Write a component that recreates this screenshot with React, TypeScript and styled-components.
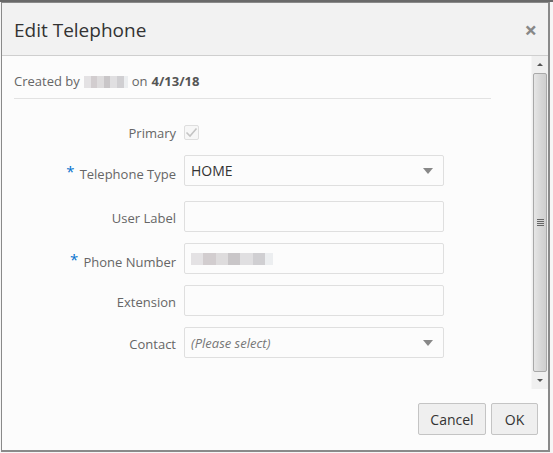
import styled, { createGlobalStyle } from 'styled-components';

const Global = createGlobalStyle`
  html, body {
    margin: 0;
    padding: 0;
    background: #f4f4f4;
    overflow: hidden;
  }
  body {
    font-family: "Open Sans", "Noto Sans", sans-serif;
    color: #333;
  }
`;

const Page = styled.div`
  position: relative;
  width: 553px;
  height: 453px;
  overflow: hidden;
  background: linear-gradient(180deg, #6a6a6a 0 2px, #f6f6f6 2px);
`;

const Dialog = styled.div`
  position: absolute;
  top: 2px;
  left: 1px;
  width: 546px;
  height: 447px;
  border: 1px solid #8a8a8a;
  border-right-width: 2px;
  border-bottom-width: 2px;
  background: #fcfcfc;
  display: flex;
  flex-direction: column;
`;

const Header = styled.div`
  height: 52px;
  flex: none;
  background: #f2f2f2;
  border-bottom: 1px solid #cfcfcf;
  display: flex;
  align-items: center;
  justify-content: space-between;
  padding: 0 11px 0 12px;
`;

const Title = styled.h1`
  margin: 0;
  font-size: 19px;
  font-weight: 400;
  color: #333;
  padding-top: 1px;
`;

const Close = styled.span`
  font-size: 22px;
  color: #888;
  line-height: 1;
  font-weight: 700;
`;

const BodyWrap = styled.div`
  height: 333px;
  flex: none;
  display: flex;
`;

const Content = styled.div`
  flex: 1;
  padding: 0 12px;
`;

const Meta = styled.div`
  height: 43px;
  border-bottom: 1px solid #e2e2e2;
  margin-right: 28px;
  display: flex;
  align-items: flex-end;
  font-size: 13px;
  color: #666;
  padding-bottom: 8px;
  box-sizing: border-box;
  gap: 4px;
`;

const Blur = styled.span<{ $w: number }>`
  display: inline-block;
  align-self: center;
  width: ${p => p.$w}px;
  height: 12px;
  background: linear-gradient(
    90deg,
    #e4e2e4 0 15%,
    #d2cdcf 15% 30%,
    #dedcdd 30% 45%,
    #c9c6c8 45% 60%,
    #e0dfe1 60% 75%,
    #d0cfd2 75% 90%,
    #eceef0 90% 100%
  );
`;

const MetaBlur = styled(Blur)`
  align-self: flex-end;
  margin-bottom: 2px;
`;

const Bold = styled.b`
  color: #555;
  font-weight: 700;
`;

const Form = styled.div`
  display: flex;
  flex-direction: column;
  padding-top: 23px;
  gap: 11px;
`;

const Row = styled.div<{ $h?: number; $after?: number }>`
  display: grid;
  grid-template-columns: 162px 260px;
  column-gap: 8px;
  align-items: center;
  height: ${p => p.$h ?? 31}px;
  margin-bottom: ${p => p.$after ?? 0}px;
`;

const Label = styled.label`
  text-align: right;
  font-size: 13px;
  color: #666;
  white-space: nowrap;
  padding-top: 2px;
`;

const Star = styled.span`
  color: #0572ce;
  font-size: 15px;
  margin-right: 5px;
  vertical-align: 2px;
`;

const Field = styled.div`
  height: 31px;
  box-sizing: border-box;
  border: 1px solid #dfdfdf;
  border-radius: 2px;
  background: #fcfcfc;
  display: flex;
  align-items: center;
  justify-content: space-between;
  padding: 0 10px 0 6px;
  font-size: 14px;
  color: #333;
`;

const Placeholder = styled.span`
  font-style: italic;
  color: #777;
  font-size: 13px;
`;

const Caret = styled.span`
  width: 0;
  height: 0;
  border-left: 5px solid transparent;
  border-right: 5px solid transparent;
  border-top: 6px solid #888;
`;

const Check = styled.div`
  width: 15px;
  height: 15px;
  box-sizing: border-box;
  border: 1px solid #dedede;
  border-radius: 2px;
  background: #f7f7f7;
  display: flex;
  align-items: center;
  justify-content: center;
`;

const Scrollbar = styled.div`
  width: 16px;
  flex: none;
  background: #f0f0f0;
  display: flex;
  flex-direction: column;
  align-items: stretch;
  border-left: 1px solid #f6f6f6;
`;

const Arrow = styled.div<{ $down?: boolean }>`
  height: 17px;
  display: flex;
  align-items: center;
  justify-content: center;
  &::after {
    content: '';
    border-left: 3px solid transparent;
    border-right: 3px solid transparent;
    ${p => (p.$down ? 'border-top: 3px solid #555;' : 'border-bottom: 3px solid #555;')}
  }
`;

const Thumb = styled.div`
  flex: 1;
  margin: 0 1px;
  border: 1px solid #a9a9a9;
  border-radius: 2px;
  background: linear-gradient(90deg, #e6e6e6, #d6d6d6 60%, #cfcfcf);
  display: flex;
  align-items: center;
  justify-content: center;
`;

const Grip = styled.div`
  width: 7px;
  height: 8px;
  background: repeating-linear-gradient(180deg, #666 0 1px, transparent 1px 2px);
`;

const Footer = styled.div`
  flex: 1;
  display: flex;
  justify-content: flex-end;
  align-items: flex-start;
  padding: 14px 10px 0 0;
  gap: 5px;
`;

const Button = styled.button<{ $w: number }>`
  width: ${p => p.$w}px;
  height: 32px;
  border: 1px solid #c4c4c4;
  border-radius: 2px;
  background: #efefef;
  font-family: inherit;
  font-size: 14px;
  color: #333;
  padding: 0;
`;

export default function App() {
  return (
    <Page>
      <Global />
      <Dialog>
        <Header>
          <Title>Edit Telephone</Title>
          <Close>×</Close>
        </Header>
        <BodyWrap>
          <Content>
            <Meta>
              Created by <MetaBlur $w={44} /> on <Bold>4/13/18</Bold>
            </Meta>
            <Form>
              <Row $h={20} $after={2}>
                <Label>Primary</Label>
                <Check>
                  <svg width="13" height="11" viewBox="0 0 13 11">
                    <path d="M1.5 5.5 L5 9 L11.5 1.5" fill="none" stroke="#c4c4c4" strokeWidth="1.6" />
                  </svg>
                </Check>
              </Row>
              <Row $after={4}>
                <Label>
                  <Star>*</Star>Telephone Type
                </Label>
                <Field>
                  HOME
                  <Caret />
                </Field>
              </Row>
              <Row>
                <Label>User Label</Label>
                <Field />
              </Row>
              <Row>
                <Label>
                  <Star>*</Star>Phone Number
                </Label>
                <Field>
                  <Blur $w={82} />
                </Field>
              </Row>
              <Row>
                <Label>Extension</Label>
                <Field />
              </Row>
              <Row>
                <Label>Contact</Label>
                <Field>
                  <Placeholder>(Please select)</Placeholder>
                  <Caret />
                </Field>
              </Row>
            </Form>
          </Content>
          <Scrollbar>
            <Arrow />
            <Thumb>
              <Grip />
            </Thumb>
            <Arrow $down />
          </Scrollbar>
        </BodyWrap>
        <Footer>
          <Button $w={68}>Cancel</Button>
          <Button $w={47}>OK</Button>
        </Footer>
      </Dialog>
    </Page>
  );
}
